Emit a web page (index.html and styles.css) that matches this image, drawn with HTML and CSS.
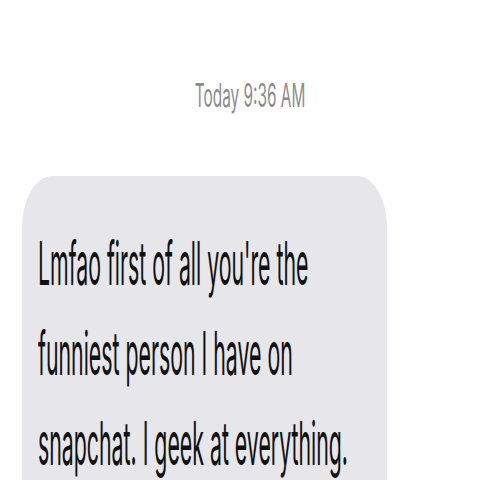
FILE: index.html
```html
<!DOCTYPE html>
<html>
<head>
<meta charset="utf-8">
<link rel="stylesheet" href="styles.css">
</head>
<body>
<div class="thread">
  <div class="stamp"><span class="stamp-text">Today 9:36 AM</span></div>
  <div class="bubble">
    <div class="msg">
      <div class="line">Lmfao first of all you're the</div>
      <div class="line">funniest person I have on</div>
      <div class="line">snapchat. I geek at everything.</div>
    </div>
  </div>
</div>
</body>
</html>
```
FILE: styles.css
```css
html, body {
  margin: 0;
  padding: 0;
  background: #ffffff;
  width: 480px;
  height: 480px;
  overflow: hidden;
}
.thread {
  display: flex;
  flex-direction: column;
}
.stamp {
  padding-top: 76px;
  padding-left: 20px;
  text-align: center;
  height: 40px;
}
.stamp-text {
  display: inline-block;
  font-family: Inter, "Noto Sans", sans-serif;
  font-size: 32px;
  line-height: 40px;
  color: #8c8c90;
  white-space: nowrap;
  transform: scaleX(0.48);
  transform-origin: center;
}
.bubble {
  margin-top: 60px;
  margin-left: 22px;
  width: 365px;
  height: 304px;
  overflow: hidden;
  background: #e6e6eb;
  border-radius: 30px 30px 0 0 / 52px 52px 0 0;
  padding-top: 42px;
  padding-left: 16px;
  box-sizing: border-box;
}
.msg {
  font-family: Inter, "Noto Sans", sans-serif;
  font-size: 60px;
  line-height: 90px;
  color: #111111;
  white-space: nowrap;
}
.line {
  transform: scaleX(0.355);
  transform-origin: left center;
}
```
